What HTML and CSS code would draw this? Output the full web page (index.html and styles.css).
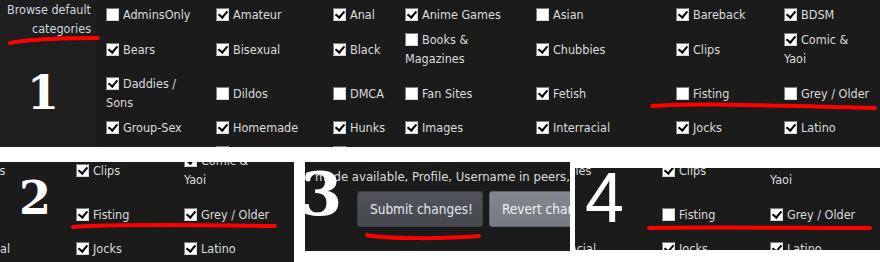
FILE: index.html
```html
<!DOCTYPE html>
<html lang="en">
<head>
    <meta charset="UTF-8">
    <meta name="viewport" content="width=device-width, initial-scale=1.0">
    <title>Browse default categories</title>
    <link rel="stylesheet" href="styles.css">
</head>
<body>
    <!-- 1: the full category picker -->
    <div class="panel top">
        <div class="cats">
            <div class="cats-head">Browse default<br>categories</div>

            <div class="cat"><span class="cb"></span>AdminsOnly</div>
            <div class="cat"><span class="cb on"></span>Amateur</div>
            <div class="cat"><span class="cb on"></span>Anal</div>
            <div class="cat"><span class="cb on"></span>Anime Games</div>
            <div class="cat"><span class="cb"></span>Asian</div>
            <div class="cat"><span class="cb on"></span>Bareback</div>
            <div class="cat"><span class="cb on"></span>BDSM</div>

            <div class="cat"><span class="cb on"></span>Bears</div>
            <div class="cat"><span class="cb on"></span>Bisexual</div>
            <div class="cat"><span class="cb on"></span>Black</div>
            <div class="cat"><span class="cb"></span>Books &amp;<br>Magazines</div>
            <div class="cat"><span class="cb on"></span>Chubbies</div>
            <div class="cat"><span class="cb on"></span>Clips</div>
            <div class="cat"><span class="cb on"></span>Comic &amp;<br>Yaoi</div>

            <div class="cat"><span class="cb on"></span>Daddies /<br>Sons</div>
            <div class="cat"><span class="cb"></span>Dildos</div>
            <div class="cat"><span class="cb"></span>DMCA</div>
            <div class="cat"><span class="cb"></span>Fan Sites</div>
            <div class="cat"><span class="cb on"></span>Fetish</div>
            <div class="cat"><span class="cb"></span>Fisting</div>
            <div class="cat"><span class="cb"></span>Grey / Older</div>

            <div class="cat"><span class="cb on"></span>Group-Sex</div>
            <div class="cat"><span class="cb on"></span>Homemade</div>
            <div class="cat"><span class="cb on"></span>Hunks</div>
            <div class="cat"><span class="cb on"></span>Images</div>
            <div class="cat"><span class="cb on"></span>Interracial</div>
            <div class="cat"><span class="cb on"></span>Jocks</div>
            <div class="cat"><span class="cb on"></span>Latino</div>

            <div class="cat"><span class="cb"></span>Massage</div>
            <div class="cat cat-top"><span class="cb on"></span>Magazine<br>Scans</div>
            <div class="cat cat-top"><span class="cb on"></span>Movies /<br>Full</div>
            <div class="cat"><span class="cb"></span>Music</div>
            <div class="cat"><span class="cb on"></span>Muscle</div>
            <div class="cat"><span class="cb on"></span>Outdoor</div>
            <div class="cat"><span class="cb on"></span>Pictures</div>
        </div>

        <span class="num num-1">1</span>
        <svg class="marks" viewBox="0 0 880 147">
            <path d="M10 43 C30 39 60 38 98 38"/>
            <path d="M652 106 C700 103 760 105 875 108"/>
        </svg>
    </div>

    <div class="crops">
        <!-- 2: tick the ones you want -->
        <div class="panel crop-2">
            <div class="cats cats-sm">
                <div class="cat"><span class="cb on"></span>Chubbies</div>
                <div class="cat"><span class="cb on"></span>Clips</div>
                <div class="cat"><span class="cb on"></span>Comic &amp;<br>Yaoi</div>
                <div class="cat"><span class="cb on"></span>Fetish</div>
                <div class="cat"><span class="cb on"></span>Fisting</div>
                <div class="cat"><span class="cb on"></span>Grey / Older</div>
                <div class="cat"><span class="cb on"></span>Interracial</div>
                <div class="cat"><span class="cb on"></span>Jocks</div>
                <div class="cat"><span class="cb on"></span>Latino</div>
            </div>
            <span class="num num-2">2</span>
            <svg class="marks" viewBox="0 0 294 100">
                <path d="M73 65 C110 62 200 63 275 64"/>
            </svg>
        </div>

        <!-- 3: save -->
        <div class="panel crop-3">
            <p class="info">e made available, Profile, Username in peers, Country</p>
            <div class="btns">
                <button class="btn btn-submit">Submit changes!</button>
                <button class="btn btn-revert">Revert changes</button>
            </div>
            <span class="num num-3">3</span>
            <svg class="marks" viewBox="0 0 265 89">
                <path d="M62 73 C80 77 140 77 174 74"/>
            </svg>
        </div>

        <!-- 4: result -->
        <div class="panel crop-4">
            <div class="cats cats-sm">
                <div class="cat"><span class="cb on"></span>Chubbies</div>
                <div class="cat"><span class="cb on"></span>Clips</div>
                <div class="cat"><span class="cb on"></span>Comic &amp;<br>Yaoi</div>
                <div class="cat"><span class="cb on"></span>Fetish</div>
                <div class="cat"><span class="cb"></span>Fisting</div>
                <div class="cat"><span class="cb on"></span>Grey / Older</div>
                <div class="cat"><span class="cb on"></span>Interracial</div>
                <div class="cat"><span class="cb on"></span>Jocks</div>
                <div class="cat"><span class="cb on"></span>Latino</div>
            </div>
            <span class="num num-4">4</span>
            <svg class="marks" viewBox="0 0 305 82">
                <path d="M74 60 C140 59 220 60 295 60"/>
            </svg>
        </div>
    </div>
</body>
</html>
```

FILE: styles.css
```css
* {
    margin: 0;
    padding: 0;
    box-sizing: border-box;
}

body {
    width: 880px;
    height: 262px;
    background: #fff;
    font-family: "DejaVu Sans Condensed", "Open Sans", sans-serif;
    font-size: 12.5px;
    color: #dcdcdc;
    overflow: hidden;
}

.panel {
    position: relative;
    background: #1b1b1b;
    overflow: hidden;
}

.top {
    height: 147px;
}

/* category grid */
.cats {
    display: grid;
    grid-template-columns: 106px 110px 117px 72px 131px 140px 108px 96px;
    grid-template-rows: 25px 44px 44px 25px 44px;
    padding-top: 2px;
}

.cats-head {
    grid-column: 1;
    grid-row: 1 / span 5;
    margin: -2px 9px 0 0;
    padding-right: 6px;
    background: #1e1e1e;
    color: #d0d6de;
    line-height: 19px;
    text-align: right;
}

.cat {
    align-self: center;
    line-height: 19px;
    white-space: nowrap;
}

.cat-top {
    align-self: start;
    padding-top: 3px;
}

.cb {
    display: inline-block;
    position: relative;
    width: 13px;
    height: 13px;
    margin-right: 4px;
    vertical-align: -2px;
    background: #fff;
    border: 1px solid;
    border-color: #7c7c7c #d4d4d4 #d4d4d4 #7c7c7c;
}

.cb.on::after {
    content: "";
    position: absolute;
    left: 3px;
    top: 0;
    width: 4px;
    height: 7px;
    border: solid #000;
    border-width: 0 2px 2px 0;
    transform: rotate(40deg);
}

.cats-sm {
    grid-template-columns: 140px 108px 130px;
    grid-template-rows: 44px 44px 25px;
    padding-top: 0;
}

/* lower strip of crops */
.crops {
    display: flex;
    align-items: flex-start;
    margin-top: 15px;
}

.crop-2 {
    width: 294px;
    height: 100px;
}

.crop-2 .cats {
    margin: -14px 0 0 -64px;
}

.crop-3 {
    width: 265px;
    height: 89px;
    margin-left: 11px;
    padding-top: 6px;
}

.crop-4 {
    flex: 1;
    height: 82px;
    margin: 6px 0 0 5px;
}

.crop-4 .cats {
    margin: -20px 0 0 -53px;
}

.info {
    margin-left: -1px;
    font-size: 13px;
    line-height: 18px;
    white-space: nowrap;
}

.btns {
    display: flex;
    gap: 6px;
    margin: 5px 0 0 52px;
}

.btn {
    height: 36px;
    padding: 0 12px;
    border: 1px solid #3c4044;
    border-radius: 3px;
    font-family: inherit;
    font-size: 13.5px;
    white-space: nowrap;
    flex-shrink: 0;
}

.btn-submit {
    width: 126px;
    background: linear-gradient(#50545a, #45494e);
    color: #e4e8ee;
}

.btn-revert {
    background: linear-gradient(#838890, #767b82);
    border-color: #5e6268;
    color: #f2f2f2;
}

/* annotations */
.num {
    position: absolute;
    color: #fff;
    font-family: "DejaVu Serif", serif;
    font-weight: bold;
    line-height: 1;
}

.num-1 {
    left: 27px;
    top: 70px;
    font-size: 46px;
}

.num-2 {
    left: 19px;
    top: 13px;
    font-size: 46px;
}

.num-3 {
    left: -4px;
    top: 3px;
    font-size: 59px;
}

.num-4 {
    left: 10px;
    top: -5px;
    font-family: "Liberation Sans", sans-serif;
    font-weight: normal;
    font-size: 70px;
}

.marks {
    position: absolute;
    top: 0;
    left: 0;
    width: 100%;
    height: 100%;
    fill: none;
    stroke: #f00;
    stroke-width: 4;
    stroke-linecap: round;
    pointer-events: none;
}
```
